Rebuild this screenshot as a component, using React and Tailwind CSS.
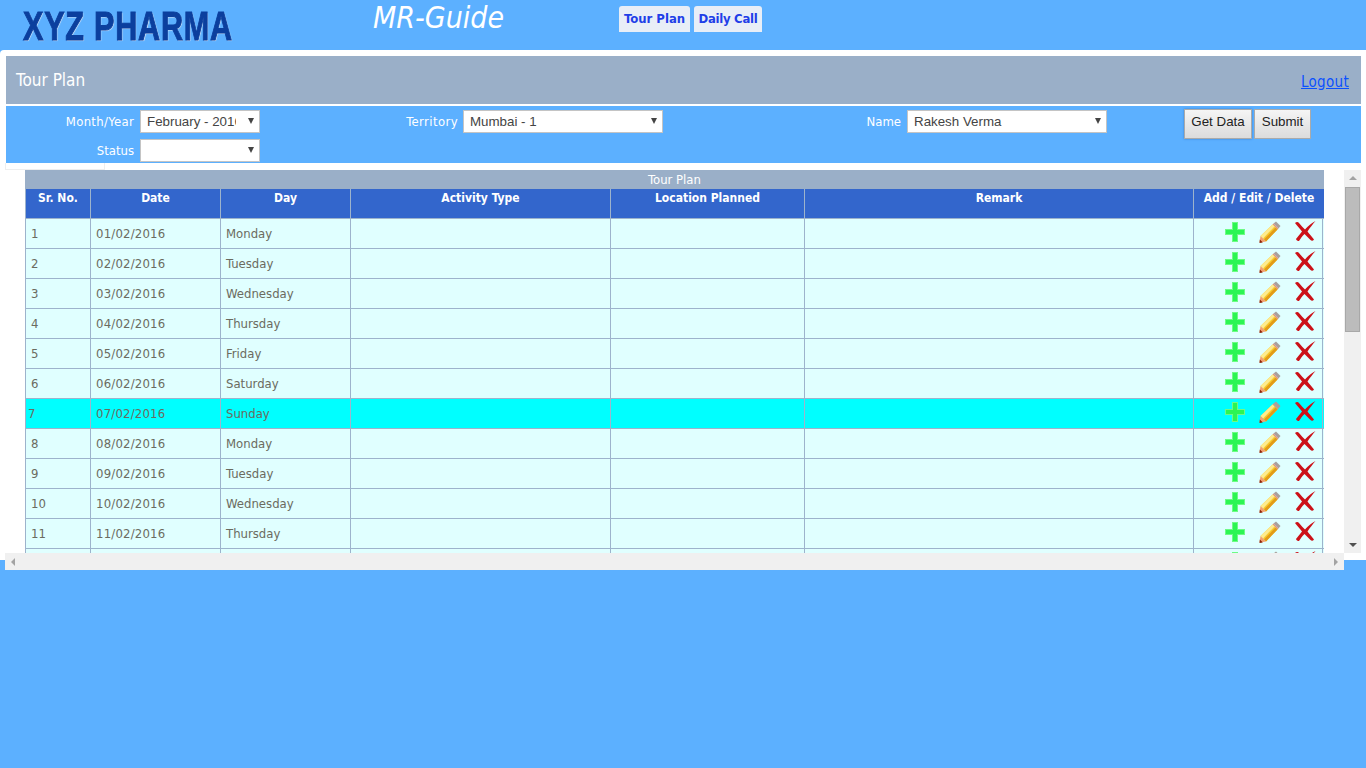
import React from 'react';

const ROWS = [
  ['1', '01/02/2016', 'Monday'],
  ['2', '02/02/2016', 'Tuesday'],
  ['3', '03/02/2016', 'Wednesday'],
  ['4', '04/02/2016', 'Thursday'],
  ['5', '05/02/2016', 'Friday'],
  ['6', '06/02/2016', 'Saturday'],
  ['7', '07/02/2016', 'Sunday'],
  ['8', '08/02/2016', 'Monday'],
  ['9', '09/02/2016', 'Tuesday'],
  ['10', '10/02/2016', 'Wednesday'],
  ['11', '11/02/2016', 'Thursday'],
  // only the icons of this row show above the scroll edge
  ['', '', ''],
];

const COLUMNS = [
  { label: 'Sr. No.', width: 'w-[65px]' },
  { label: 'Date', width: 'w-[130px]' },
  { label: 'Day', width: 'w-[130px]' },
  { label: 'Activity Type', width: 'w-[260px]' },
  { label: 'Location Planned', width: 'w-[194px]' },
  { label: 'Remark', width: 'w-[389px]' },
  { label: 'Add / Edit / Delete', width: 'w-[131px]' },
];

const PlusIcon = () => (
  <svg width="22" height="22" viewBox="0 0 22 22" className="blur-[0.6px]">
    <path d="M8 1h6v7h7v6h-7v7H8v-7H1V8h7z" fill="#6dfb85" />
    <path d="M9 2h4v7h7v4h-7v7H9v-7H2V9h7z" fill="#2cf552" />
  </svg>
);

const PencilIcon = () => (
  <svg width="22" height="22" viewBox="0 0 22 22">
    <path d="M17 0.5l4.5 4.5-2 2.5L14.5 2.5z" fill="#a8a09c" />
    <path d="M14.5 2.5l5 5-1 1-5-5z" fill="#e0907c" />
    <path d="M13.5 3.5l5 5L7 20.5 1.5 15z" fill="#f6ca30" />
    <path d="M13.5 3.5l2 2L4 17.5 1.5 15z" fill="#fdeb90" />
    <path d="M16.5 6.5l2 2L7 20.5l-2-2z" fill="#e29c18" />
    <path d="M1.5 15L7 20.5 0.5 21.5z" fill="#f2a070" />
    <path d="M0.8 18.5l3 3-3.3.4z" fill="#8a2008" />
  </svg>
);

const CrossIcon = () => (
  <svg width="22" height="22" viewBox="0 0 22 22" className="blur-[0.5px]">
    <path d="M1 3C2.5 1.5 4 1.5 5 3 7 5.5 9 7.5 11 9.5 14 6 17.5 3 21.5 1 19 4 16 7.5 13.5 11.5 15.5 14 17.5 16.5 20 19.5 19 21 17.5 21 16.5 20 14.5 18 12.5 16 10.5 14 8.5 16 6.5 18.5 5 21 3.5 21 2.5 20.5 2 19 4 16.5 6 14 8 11.5 5.5 8.5 3.5 6 1 3z" fill="#cc1118" />
  </svg>
);

const TableRow = ({ row, highlight }) => (
  <div className={`flex h-[30px] border-b border-[#9db3cc] text-[13px] leading-[18px] text-[#6b6b60] ${highlight ? 'bg-[#00ffff]' : 'bg-[#e0ffff]'}`}>
    <div className={`w-[65px] shrink-0 border-l border-[#9db3cc] pt-[6px] ${highlight ? 'pl-[2px]' : 'pl-[5px]'}`}>{row[0]}</div>
    <div className="w-[130px] shrink-0 border-l border-[#9db3cc] pl-[5px] pt-[6px] tracking-[0.2px]">{row[1]}</div>
    <div className="w-[130px] shrink-0 border-l border-[#9db3cc] pl-[5px] pt-[6px]">{row[2]}</div>
    <div className="w-[260px] shrink-0 border-l border-[#9db3cc]" />
    <div className="w-[194px] shrink-0 border-l border-[#9db3cc]" />
    <div className="w-[389px] shrink-0 border-l border-[#9db3cc]" />
    <div className="flex w-[130px] shrink-0 gap-[13px] border-x border-[#9db3cc] pl-[30px] pt-[2px]">
      <PlusIcon />
      <PencilIcon />
      <span className="-mt-[1px]"><CrossIcon /></span>
    </div>
  </div>
);

const FormSelect = ({ value, width }) => (
  <span className={`relative block h-[23px] ${width}`}>
    <select
      defaultValue={value}
      className="h-[23px] w-full appearance-none border border-[#c4c4c4] bg-white pl-[6px] pr-[23px] text-[13.33px] text-[#444] font-['Liberation_Sans',sans-serif] [font-stretch:normal]"
    >
      <option>{value}</option>
    </select>
    <span className="absolute right-[6px] top-[8px] h-0 w-0 border-x-[3.5px] border-t-[6px] border-x-transparent border-t-[#444]" />
  </span>
);

export default function App() {
  return (
    <div className="min-h-[768px] bg-[#5cb0ff] font-['DejaVu_Sans_Condensed','DejaVu_Sans',sans-serif] [font-stretch:condensed]">
      {/* Header */}
      <div className="flex h-[50px] overflow-hidden">
        <div className="ml-[23px] w-[350px] pt-[2px]">
          <span className="inline-block origin-left scale-x-[0.765] whitespace-nowrap text-[40px] font-bold leading-[48px] tracking-[1px] text-[#0b3f9e] font-['Liberation_Sans',sans-serif] [-webkit-text-stroke:1px_#0b3f9e] [text-shadow:1px_1px_1px_#d5e4f5]">
            XYZ PHARMA
          </span>
        </div>
        <div className="w-[246px] text-[30px] italic leading-[36px] text-white">MR-Guide</div>
        <div className="flex gap-[4px] pt-[6px]">
          <div className="h-[26px] w-[71px] rounded-t-[3px] bg-[#e8eef7] pt-[4px] text-center text-[13px] font-bold leading-[17px] text-[#1f3fe8]">Tour Plan</div>
          <div className="h-[26px] w-[68px] rounded-t-[3px] bg-[#e8eef7] pt-[4px] text-center text-[13px] font-bold leading-[17px] tracking-[-0.3px] text-[#1f3fe8]">Daily Call</div>
        </div>
      </div>

      {/* Main panel */}
      <div className="h-[510px] rounded-tl-[4px] bg-white pt-[6px]">
        <div className="mx-[6px] mr-[5px] flex h-[48px] items-start justify-between bg-[#9aafc8] pl-[10px] pr-[12px]">
          <span className="pt-[14px] text-[17px] leading-[20px] text-white">Tour Plan</span>
          <a href="#" className="pt-[17px] text-[15px] leading-[18px] tracking-[0.3px] text-[#0a50ff] underline">Logout</a>
        </div>

        {/* Filters */}
        <div className="mx-[6px] mr-[5px] mt-[2px] flex h-[57px] bg-[#5cb0ff] pt-[4px] text-[13px] text-white">
          <div className="flex w-[254px] flex-col items-end gap-[6px]">
            <div className="flex h-[23px] items-center gap-[6px]"><span className="tracking-[0.3px]">Month/Year</span><FormSelect value="February - 2016" width="w-[120px]" /></div>
            <div className="flex h-[23px] items-center gap-[6px]"><span>Status</span><FormSelect value="" width="w-[120px]" /></div>
          </div>
          <div className="flex h-[23px] w-[403px] items-center justify-end gap-[5px]"><span className="tracking-[0.4px]">Territory</span><FormSelect value="Mumbai - 1" width="w-[200px]" /></div>
          <div className="flex h-[23px] w-[444px] items-center justify-end gap-[6px]"><span>Name</span><FormSelect value="Rakesh Verma" width="w-[200px]" /></div>
          <div className="ml-[77px] -mt-[1px] flex gap-[2px] font-['Liberation_Sans',sans-serif] text-[13.33px] text-[#222] [font-stretch:normal]">
            <button className="h-[30px] w-[68px] border border-[#aaa] bg-gradient-to-b from-[#f5f5f5] to-[#dcdcdc] pb-[4px] shadow-[0_0_2px_#3a7fd0]">Get Data</button>
            <button className="h-[30px] w-[57px] border border-[#aaa] bg-gradient-to-b from-[#f5f5f5] to-[#dcdcdc] pb-[4px]">Submit</button>
          </div>
        </div>

        <div className="ml-[5px] h-[7px] w-[100px] border border-t-0 border-[#eeeeee] bg-white" />

        {/* Scroll area */}
        <div className="ml-[5px] w-[1356px]">
          <div className="flex h-[383px]">
            <div className="w-[1339px] overflow-hidden pl-[20px]">
              <div className="w-[1299px]">
                <div className="h-[19px] bg-[#9aafc8] text-center text-[13px] leading-[20px] text-white">Tour Plan</div>
                <div className="flex h-[30px] border-b border-[#9db3cc] bg-[#3366cc] text-center text-[12px] font-bold leading-[16px] text-white">
                  {COLUMNS.map((col) => (
                    <div key={col.label} className={`${col.width} shrink-0 border-l border-[#9db3cc] pt-[1px]`}>
                      {col.label}
                    </div>
                  ))}
                </div>
                {ROWS.map((row, idx) => (
                  <TableRow key={idx} row={row} highlight={idx === 6} />
                ))}
              </div>
            </div>
            {/* Vertical scrollbar */}
            <div className="flex w-[17px] flex-col items-center bg-[#f0f0f0]">
              <div className="mt-[6px] h-0 w-0 border-x-[4px] border-b-[4px] border-x-transparent border-b-[#a3a3a3]" />
              <div className="mt-[7px] h-[145px] w-[15px] border border-[#a8a8a8] bg-[#bcbcbc]" />
              <div className="mt-auto mb-[6px] h-0 w-0 border-x-[4px] border-t-[4px] border-x-transparent border-t-[#505050]" />
            </div>
          </div>
          {/* Horizontal scrollbar */}
          <div className="flex h-[17px] w-[1339px] items-center justify-between bg-[#f0f0f0] px-[6px]">
            <div className="h-0 w-0 border-y-[4px] border-r-[4px] border-y-transparent border-r-[#a3a3a3]" />
            <div className="h-0 w-0 border-y-[4px] border-l-[4px] border-y-transparent border-l-[#a3a3a3]" />
          </div>
        </div>
      </div>
    </div>
  );
}
